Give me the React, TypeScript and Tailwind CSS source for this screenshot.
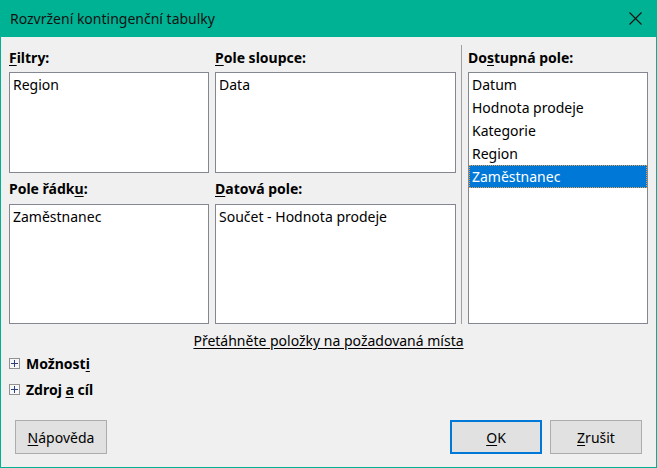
import React from "react";

const font = { fontFamily: '"Noto Sans", "Open Sans", sans-serif' };

function U({ children }: { children: React.ReactNode }) {
  return <span className="underline underline-offset-2">{children}</span>;
}

function Box({ items, className }: { items: string[]; className: string }) {
  return (
    <div className={`border border-[#828790] bg-white ${className}`}>
      {items.map((item) => (
        <div key={item} className="flex h-[23px] items-center px-[3px] text-[14px] text-black">
          {item}
        </div>
      ))}
    </div>
  );
}

function Expander({ children }: { children: React.ReactNode }) {
  return (
    <div className="flex h-[26px] items-center gap-[6px]">
      <span className="flex h-[11px] w-[11px] items-center justify-center border border-[#919191] bg-[#f7f7f7]">
        <svg width="9" height="9" viewBox="0 0 9 9">
          <path d="M1 4.5h7M4.5 1v7" stroke="#2b3f7a" strokeWidth="1" />
        </svg>
      </span>
      <span className="text-[14px] font-bold text-black">{children}</span>
    </div>
  );
}

function Button({ children, focused }: { children: React.ReactNode; focused?: boolean }) {
  return (
    <button
      className={`flex h-[34px] w-[92px] items-center justify-center bg-[#e1e1e1] text-[14px] text-black ${
        focused ? "border-2 border-[#0078d7]" : "border border-[#adadad]"
      }`}
    >
      {children}
    </button>
  );
}

export default function App() {
  const available = ["Datum", "Hodnota prodeje", "Kategorie", "Region"];

  return (
    <div className="flex h-[468px] w-[657px] flex-col bg-[#00b294]" style={font}>
      <div className="flex h-[37px] items-center justify-between pl-[10px] pr-[15px]">
        <span className="text-[14px] text-[#111]">Rozvržení kontingenční tabulky</span>
        <svg width="13" height="13" viewBox="0 0 13 13">
          <path d="M0.5 0.5l12 12M12.5 0.5l-12 12" stroke="#111" strokeWidth="1.1" />
        </svg>
      </div>

      <div className="mx-px mb-px flex flex-1 flex-col bg-[#f0f0f0] px-[8px] pt-[8px]">
        <div className="flex">
          <div className="flex w-[447px] flex-col">
            <div className="flex gap-[6px]">
              <div className="flex w-[200px] flex-col">
                <div className="flex h-[25px] items-center text-[14px] font-bold">
                  <U>F</U>iltry:
                </div>
                <Box items={["Region"]} className="mt-[2px] h-[101px]" />
              </div>
              <div className="flex flex-1 flex-col">
                <div className="flex h-[25px] items-center text-[14px] font-bold">
                  <U>P</U>ole sloupce:
                </div>
                <Box items={["Data"]} className="mt-[2px] h-[101px]" />
              </div>
            </div>
            <div className="flex gap-[6px]">
              <div className="flex w-[200px] flex-col">
                <div className="flex h-[31px] items-center text-[14px] font-bold">
                  Pole řádk<U>u</U>:
                </div>
                <Box items={["Zaměstnanec"]} className="h-[120px]" />
              </div>
              <div className="flex flex-1 flex-col">
                <div className="flex h-[31px] items-center text-[14px] font-bold">
                  <U>D</U>atová pole:
                </div>
                <Box items={["Součet - Hodnota prodeje"]} className="h-[120px]" />
              </div>
            </div>
          </div>

          <div className="ml-[5px] mr-[6px] w-px bg-[#a0a0a0]" />

          <div className="flex w-[180px] flex-col">
            <div className="flex h-[25px] items-center text-[14px] font-bold">
              Do<U>s</U>tupná pole:
            </div>
            <div className="mt-[2px] h-[252px] border border-[#828790] bg-white">
              {available.map((item) => (
                <div key={item} className="flex h-[23px] items-center px-[3px] text-[14px] text-black">
                  {item}
                </div>
              ))}
              <div className="flex h-[23px] items-center border border-dotted border-[#e9a04c] bg-[#0078d7] px-[2px] text-[14px] text-white">
                Zaměstnanec
              </div>
            </div>
          </div>
        </div>

        <div className="mt-[6px] flex h-[20px] items-center justify-center">
          <span className="text-[14px] text-black underline underline-offset-2">
            Přetáhněte položky na požadovaná místa
          </span>
        </div>

        <Expander>
          Možnost<U>i</U>
        </Expander>
        <Expander>
          Zdroj <U>a</U> cíl
        </Expander>

        <div className="mt-[18px] flex items-center px-[6px]">
          <Button>
            <U>N</U>ápověda
          </Button>
          <div className="flex-1" />
          <div className="flex gap-[8px]">
            <Button focused>
              <U>O</U>K
            </Button>
            <Button>
              <U>Z</U>rušit
            </Button>
          </div>
        </div>
      </div>
    </div>
  );
}
